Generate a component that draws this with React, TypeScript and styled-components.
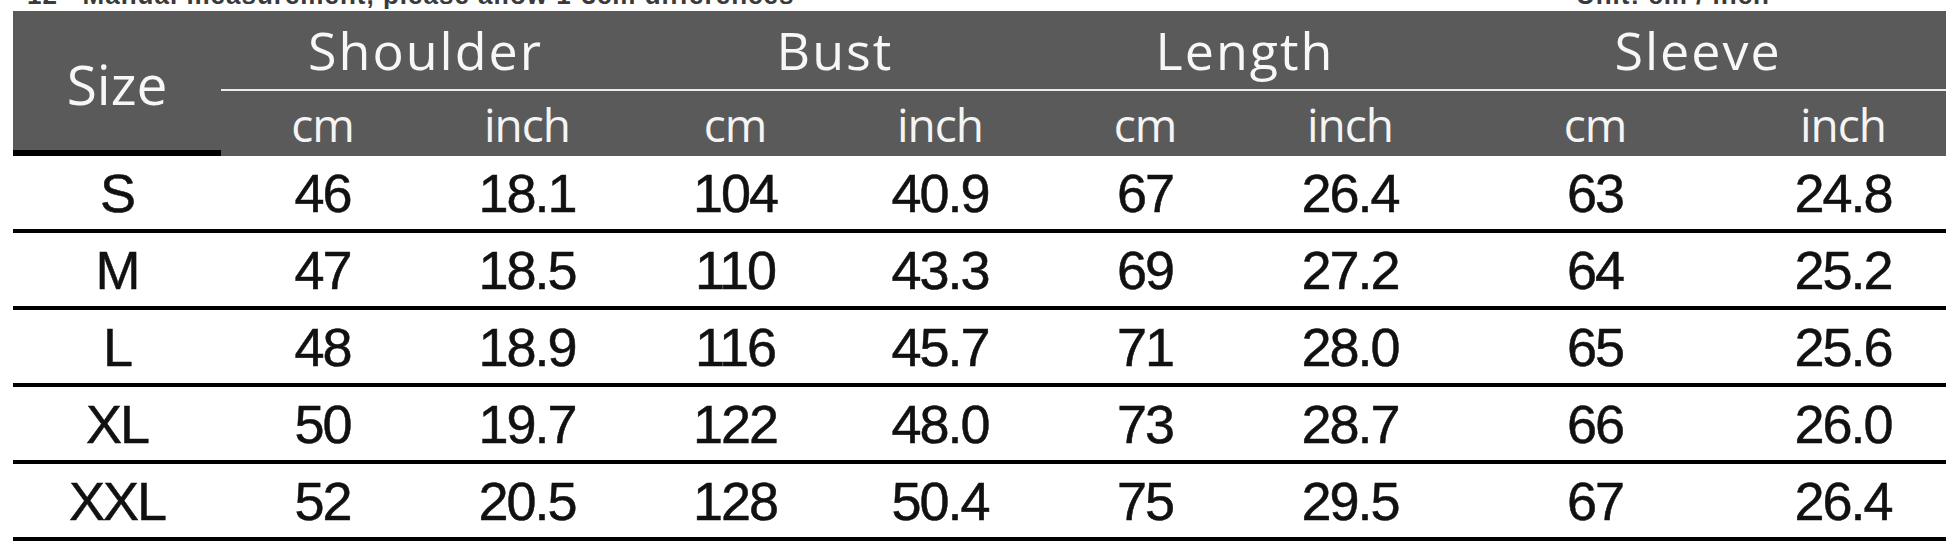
import React from "react";
import styled, { createGlobalStyle } from "styled-components";

const GlobalStyle = createGlobalStyle`
  html, body {
    margin: 0;
    padding: 0;
    background: #ffffff;
    overflow: hidden;
  }
  body {
    width: 1946px;
    height: 552px;
  }
`;

const Page = styled.div`
  width: 1946px;
  height: 552px;
  display: flex;
  flex-direction: column;
  background: #ffffff;
`;

const Caption = styled.div`
  height: 11px;
  overflow: hidden;
  display: flex;
  align-items: flex-end;
  justify-content: space-between;
  padding: 0 176px 0 27px;
  font-family: "Liberation Sans", "Noto Sans CJK SC", sans-serif;
  font-size: 26px;
  line-height: 26px;
  font-weight: 700;
  color: #3a3a3a;
  white-space: nowrap;
`;

const CaptionText = styled.span`
  display: block;
  margin-bottom: 3px;
  letter-spacing: 1px;
`;

const Table = styled.div`
  margin-left: 13px;
  display: grid;
  grid-template-columns: 208px 203px 206px 210px 200px 210px 200px 290px 206px;
  grid-template-rows: 80px 65px repeat(5, 77px);
`;

const SizeHead = styled.div`
  grid-row: 1 / span 2;
  grid-column: 1;
  box-sizing: border-box;
  background: #5a5a5a;
  border-bottom: 6px solid #000000;
  display: flex;
  align-items: center;
  justify-content: center;
  font-family: "Open Sans", "Noto Sans", sans-serif;
  font-size: 55px;
  line-height: 1;
  color: #f7f7f7;
  padding-top: 6px;
`;

const GroupHead = styled.div`
  grid-column: span 2;
  box-sizing: border-box;
  background: #5a5a5a;
  border-bottom: 2px solid #ececec;
  display: flex;
  align-items: center;
  justify-content: center;
  font-family: "Open Sans", "Noto Sans", sans-serif;
  font-size: 52px;
  letter-spacing: 2px;
  line-height: 1;
  color: #f7f7f7;
`;

const UnitHead = styled.div`
  background: #5a5a5a;
  display: flex;
  align-items: center;
  justify-content: center;
  font-family: "Open Sans", "Noto Sans", sans-serif;
  font-size: 46px;
  letter-spacing: -1px;
  line-height: 1;
  color: #f4f4f4;
`;

const Cell = styled.div`
  box-sizing: border-box;
  border-bottom: 4px solid #000000;
  display: flex;
  align-items: center;
  justify-content: center;
  font-family: "Liberation Sans", Arial, sans-serif;
  font-size: 54px;
  letter-spacing: -2px;
  line-height: 1;
  color: #111111;
  -webkit-text-stroke: 0.5px #111111;
`;

const groups = ["Shoulder", "Bust", "Length", "Sleeve"];

const rows: string[][] = [
  ["S", "46", "18.1", "104", "40.9", "67", "26.4", "63", "24.8"],
  ["M", "47", "18.5", "110", "43.3", "69", "27.2", "64", "25.2"],
  ["L", "48", "18.9", "116", "45.7", "71", "28.0", "65", "25.6"],
  ["XL", "50", "19.7", "122", "48.0", "73", "28.7", "66", "26.0"],
  ["XXL", "52", "20.5", "128", "50.4", "75", "29.5", "67", "26.4"],
];

export default function App() {
  return (
    <Page>
      <GlobalStyle />
      <Caption>
        <CaptionText>12 &nbsp; Manual measurement, please allow 1-3cm differences</CaptionText>
        <CaptionText>Unit: cm / inch</CaptionText>
      </Caption>
      <Table>
        <SizeHead>Size</SizeHead>
        {groups.map((g) => (
          <GroupHead key={g}>{g}</GroupHead>
        ))}
        {groups.map((g) => (
          <React.Fragment key={g + "-u"}>
            <UnitHead>cm</UnitHead>
            <UnitHead>inch</UnitHead>
          </React.Fragment>
        ))}
        {rows.map((r) =>
          r.map((v, i) => <Cell key={r[0] + i}>{v}</Cell>)
        )}
      </Table>
    </Page>
  );
}
